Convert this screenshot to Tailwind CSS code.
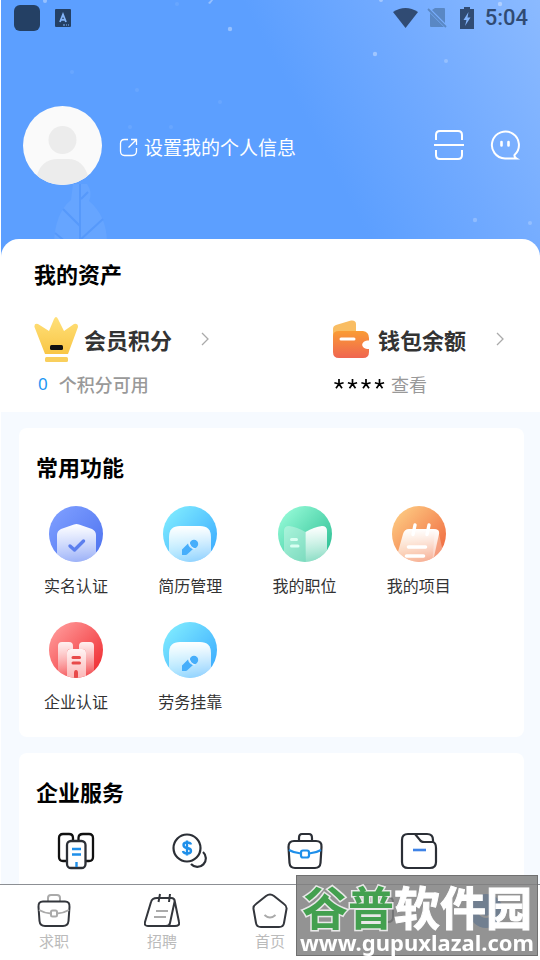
<!DOCTYPE html>
<html lang="zh-CN">
<head>
<meta charset="utf-8">
<meta name="viewport" content="width=device-width, initial-scale=1">
<title>我的</title>
<script src="https://cdn.jsdelivr.net/npm/@tailwindcss/browser@4"></script>
</head>
<body class="bg-white font-['Noto_Sans_CJK_SC',sans-serif] text-[#333]">
<svg class="absolute size-0" aria-hidden="true">
  <defs>
    <linearGradient id="blue" x1="0" y1="0" x2="1" y2="1"><stop offset="0.1" stop-color="#7c9dff"/><stop offset="1" stop-color="#4b70ee"/></linearGradient>
    <linearGradient id="cyan" x1="0" y1="0" x2="1" y2="1"><stop offset="0.1" stop-color="#7eeaff"/><stop offset="0.9" stop-color="#3cacff"/></linearGradient>
    <linearGradient id="green" x1="0" y1="0" x2="1" y2="1"><stop offset="0.1" stop-color="#93f9d6"/><stop offset="0.9" stop-color="#2dbf94"/></linearGradient>
    <linearGradient id="orange" x1="0" y1="0" x2="1" y2="1"><stop offset="0.1" stop-color="#fdc981"/><stop offset="0.9" stop-color="#f0693f"/></linearGradient>
    <linearGradient id="red" x1="0" y1="0" x2="1" y2="1"><stop offset="0.1" stop-color="#ff9797"/><stop offset="0.9" stop-color="#f02e33"/></linearGradient>
    <linearGradient id="fade" x1="0" y1="0" x2="0" y2="1"><stop offset="0" stop-color="#fff"/><stop offset="1" stop-color="#fff" stop-opacity="0.35"/></linearGradient>
    <linearGradient id="tower" x1="0" y1="0" x2="0" y2="1"><stop offset="0" stop-color="#fff0f0"/><stop offset="0.9" stop-color="#fff" stop-opacity="0.05"/></linearGradient>
    <linearGradient id="front" x1="0" y1="0" x2="0" y2="1"><stop offset="0" stop-color="#fff4f4"/><stop offset="1" stop-color="#fbaeae"/></linearGradient>
    <linearGradient id="gold" x1="0" y1="0" x2="0" y2="1"><stop offset="0" stop-color="#ffe07a"/><stop offset="1" stop-color="#f9c645"/></linearGradient>
    <linearGradient id="wallet" x1="0" y1="0" x2="0" y2="1"><stop offset="0" stop-color="#fa9c35"/><stop offset="1" stop-color="#ef6550"/></linearGradient>
    <clipPath id="disc"><ellipse cx="27" cy="28" rx="27" ry="28"/></clipPath>
    <symbol id="resume" viewBox="0 0 54 56">
      <g clip-path="url(#disc)"><path fill="url(#cyan)" d="M0 0h54v56H0z"/>
      <path fill="url(#fade)" d="M6 60V31Q6 20 17 20H37Q48 20 48 31V60z"/>
      <path fill="#46aefb" d="M19 49V43.500L25 37.500A7 7 0 0 0 30 43L24 48.500Q23 49 22 49Z"/><circle cx="31" cy="38" r="4.200" fill="#46aefb"/><path d="M26 36Q27 41.500 32 43" fill="none" stroke="#dff1ff" stroke-width="1.200"/></g>
    </symbol>
    <symbol id="chevron" viewBox="0 0 8 14"><path d="M1 1l6 6-6 6" fill="none" stroke="#aaa" stroke-width="1.300"/></symbol>
  </defs>
</svg>

<div class="relative flex h-screen flex-col overflow-hidden">
  <main class="ml-px min-h-0 flex-1 overflow-y-auto bg-[#f6faff] [scrollbar-width:none]">
    <header class="relative h-[259px] bg-[linear-gradient(62deg,#5c9fff_56%,#71aaff_76%,#8bbaff_100%)]">
      <svg class="absolute inset-0 size-full" viewBox="0 0 539 259" preserveAspectRatio="none" aria-hidden="true">
        <g fill="#fff">
          <g opacity=".35"><circle cx="229" cy="29" r="2.200"/><circle cx="374" cy="54" r="2.200"/><circle cx="499" cy="4" r="2.200"/><circle cx="44" cy="1" r="2"/><circle cx="380" cy="0" r="2"/><path d="M207 3l4-4 2 0-4 5z"/></g>
          <g opacity=".22"><circle cx="445" cy="61" r="2"/><circle cx="474" cy="220" r="2.200"/><circle cx="529" cy="223" r="2"/></g>
          <g opacity=".07"><circle cx="71" cy="72" r="2"/><circle cx="136" cy="90" r="2"/><circle cx="219" cy="102" r="2"/><circle cx="129" cy="127" r="2"/><circle cx="170" cy="127" r="2"/><circle cx="176" cy="4" r="2"/></g>
        </g>
        <path fill="#66a5ff" d="M53 243Q54 213 70 200L72 184H86Q92 192 88 201Q106 216 106 243Z"/>
        <path d="M79 184V243M62 209L79 226M102 219L79 240M54 233L66 243M80 199l7-7" fill="none" stroke="#5699fb" stroke-width="2"/>
      </svg>
      <div class="relative flex h-9 items-center justify-between pl-[13px] pr-3">
        <div class="flex items-center gap-[15px]">
          <span class="size-[26px] rounded-md bg-[#244064]"></span>
          <svg class="h-[18px] w-4" viewBox="0 0 16 18"><rect width="16" height="18" rx="1" fill="#244064"/><path d="M5 13L8 5.500L11 13M6 10.800H10" fill="none" stroke="#83b5fa" stroke-width="1.800"/><path d="M8 16h2m1 0h1m1 0h1" stroke="#83b5fa"/></svg>
        </div>
        <div class="flex items-center">
          <svg class="mr-2 h-[22px] w-[27px]" viewBox="0 0 27 22"><path fill="#304b73" d="M1 5Q13.500-3 26 5L13.500 21Z"/></svg>
          <svg class="mr-[13px] h-[22px] w-5" viewBox="0 0 20 22"><path fill="#5987c4" d="M8 1h9q1 0 1 1v14L5 3zM3 6l14 14H4q-1 0-1-1z"/><path d="M1 2l18 18" stroke="#5987c4" stroke-width="1.800"/></svg>
          <svg class="mr-[11px] h-[22px] w-[14px]" viewBox="0 0 14 22"><path fill="#304b73" d="M4 0h6v2h4v20H0V2h4z"/><path fill="#83b4fb" d="M8.500 5L3.500 13H6.500L5 19L10.500 10.500H7.500Z"/></svg>
          <span class="font-[Roboto,sans-serif] text-[22px] leading-9 font-medium text-[#304b73]">5:04</span>
        </div>
      </div>
      <div class="relative flex items-center pt-[70px] pr-[19px] pl-[22px]">
        <svg class="h-[79px] w-[79px]" viewBox="0 0 79 79" role="img" aria-label="头像"><clipPath id="avatar"><circle cx="39.500" cy="39.500" r="39.500"/></clipPath><g clip-path="url(#avatar)"><path fill="#fafafa" d="M0 0h79v79H0z"/><circle cx="39.500" cy="34" r="14" fill="#ececec"/><path fill="#ececec" d="M13 80V73Q17 53 35 53H45Q61 53 66 73V80z"/></g></svg>
        <a href="#profile" class="ml-[17px] flex items-center gap-1.5 text-[19px] leading-7 text-white">
          <svg class="mt-1 h-[19px] w-[19px]" viewBox="0 0 19 19" fill="none" stroke="#fff" stroke-width="1.300"><path d="M9 1.500H5.500Q1.500 1.500 1.500 5.500V13Q1.500 17.500 5.500 17.500H13Q17.500 17.500 17.500 13V10M9.500 9.500L17 2M12 1.500H17.500V7"/></svg>
          <span class="mt-0.5">设置我的个人信息</span>
        </a>
        <button type="button" class="mb-0.5 ml-auto" aria-label="扫一扫"><svg class="h-8 w-[30px]" viewBox="0 0 30 32" fill="none" stroke="#fff" stroke-width="2"><path d="M2 11V6Q2 2 6 2H24Q28 2 28 6V11M0 16H30M2 21V26Q2 30 6 30H24Q28 30 28 26V21"/></svg></button>
        <button type="button" class="mb-0.5 ml-[25px]" aria-label="消息"><svg class="h-8 w-8" viewBox="0 0 32 32" fill="none" stroke="#fff" stroke-width="2"><path d="M25.500 26A13.500 13.500 0 1 0 16 29.500H27.500Q25 28 25.500 26Z"/><path d="M12.500 13v3.500M19.500 13v3.500" stroke-width="2.600" stroke-linecap="round"/></svg></button>
      </div>
    </header>

    <section class="relative -mt-5 rounded-t-[18px] bg-white px-[33px] pt-[18px] pb-3">
      <h2 class="text-[22px] leading-8 font-bold text-black">我的资产</h2>
      <div class="mt-[25px] flex justify-between">
        <div>
          <a href="#points" class="flex h-[50px] items-center">
            <svg class="h-[46px] w-[44px]" viewBox="0 0 44 46"><path fill="url(#gold)" d="M11 38L0.500 11Q0 7 4 8L15 15L20 3Q22 -1 24 3L30 15L40 8Q44 7 44 11L34 38Z"/><rect x="16" y="29" width="13" height="5" rx="1.500" fill="#111"/><rect x="11" y="41" width="23" height="5" rx="1.500" fill="#f9cf5d"/></svg>
            <span class="ml-[6px] text-[22px] leading-8 font-bold">会员积分</span>
            <svg class="ml-[29px] h-[14px] w-2"><use href="#chevron"/></svg>
          </a>
          <p class="mt-1 flex gap-[11px] pl-1 text-[18px] leading-8"><span class="font-['Noto_Sans',sans-serif] text-[17px] text-[#2196f3]">0</span><span class="font-medium text-[#999]">个积分可用</span></p>
        </div>
        <div>
          <a href="#wallet" class="flex h-[50px] items-center">
            <svg class="h-[38px] w-[38px]" viewBox="0 0 38 38"><path fill="#f9bd63" d="M1 18V9Q1 6 4 5L19 .5Q24 0 24 4V16z"/><path fill="url(#wallet)" d="M7 11H31Q37 12 37 18V20.500C28 20.500 28 29 37 29V32Q37 38 31 38H7Q1 38 1 32V16Q1 11 7 11Z"/><path d="M9 19H22" stroke="#fff" stroke-width="3" stroke-linecap="round"/></svg>
            <span class="ml-2 text-[22px] leading-8 font-bold">钱包余额</span>
            <svg class="mr-[3px] ml-[30px] h-[14px] w-2"><use href="#chevron"/></svg>
          </a>
          <p class="mt-1 flex items-center gap-[5px] pl-[2px] text-[18px] leading-8">
            <svg class="h-[10px] w-[52px]" viewBox="0 0 52 10" stroke="#000" stroke-width="1.700" role="img" aria-label="余额已隐藏"><g id="star"><path d="M5 0V5L.4 3.700M5 5L9.600 3.700M5 5L2 9.300M5 5L8 9.300" fill="none"/></g><use href="#star" x="13.500"/><use href="#star" x="27"/><use href="#star" x="40.500"/></svg>
            <span class="text-[#999]">查看</span>
          </p>
        </div>
      </div>
    </section>

    <section class="mt-4 mr-4 ml-[18px] rounded-lg bg-white pt-[22px] pb-[21px]">
      <h2 class="pl-[17px] text-[22px] leading-8 font-bold text-black">常用功能</h2>
      <div class="mt-6 grid grid-cols-4 gap-y-[22px] pr-12 text-center text-[16px] leading-[30px]">
        <a href="#realname" class="flex flex-col items-center gap-2 text-[#333]">
          <svg class="h-14 w-[54px]" viewBox="0 0 54 56"><g clip-path="url(#disc)"><path fill="url(#blue)" d="M0 0h54v56H0z"/><path fill="url(#fade)" d="M8 60V29Q8 25 12 23L25 18.500Q27.500 17.500 30 18.500L43 23Q47 25 47 29V60z"/><path d="M21 40L25.500 44L34.500 35" fill="none" stroke="#5c7fee" stroke-width="3.400" stroke-linecap="round" stroke-linejoin="round"/></g></svg>实名认证</a>
        <a href="#resume-list" class="flex flex-col items-center gap-2 text-[#333]"><svg class="h-14 w-[54px]"><use href="#resume"/></svg>简历管理</a>
        <a href="#jobs" class="flex flex-col items-center gap-2 text-[#333]">
          <svg class="h-14 w-[54px]" viewBox="0 0 54 56"><g clip-path="url(#disc)"><path fill="url(#green)" d="M0 0h54v56H0z"/><path fill="#fff" fill-opacity=".32" d="M27.500 60V26Q19 21 11 20Q6 20 6 25V60z"/><path fill="url(#fade)" d="M27.500 60V26Q36 21 44 20Q49 20 49 25V60z"/><path d="M13.500 33.500H18.500M13.500 40H20" stroke="#d9fff2" stroke-width="3" stroke-linecap="round"/></g></svg>我的职位</a>
        <a href="#projects" class="flex flex-col items-center gap-2 text-[#333]">
          <svg class="h-14 w-[54px]" viewBox="0 0 54 56"><g clip-path="url(#disc)"><path fill="url(#orange)" d="M0 0h54v56H0z"/><path fill="#fff" fill-opacity=".3" d="M43 23Q47 25 47 28L52 50L40 60z"/><path fill="url(#fade)" d="M2 60L11 28Q12.500 23 17 23H42Q48 23 47 28L40 60z"/><path d="M23 19L21 28.500M37 19L35 28.500" stroke="#fff" stroke-width="3.400" stroke-linecap="round"/><path d="M16.500 41H33.500M14.500 50H31.500" stroke="#fff" stroke-width="3.600" stroke-linecap="round"/></g></svg>我的项目</a>
        <a href="#company" class="flex flex-col items-center gap-2 text-[#333]">
          <svg class="h-14 w-[54px]" viewBox="0 0 54 56"><g clip-path="url(#disc)"><path fill="url(#red)" d="M0 0h54v56H0z"/><path fill="url(#tower)" d="M9 60V24Q9 20 13 20H20Q24 20 24 24V27H21Q18 27 18 31V60zM45 60V24Q45 20 41 20H34Q30 20 30 24V27H33Q37 27 37 31V60z"/><path fill="url(#front)" d="M18 60V31Q18 27 22 27H33Q37 27 37 31V60z"/><path d="M24 35.500H30.500M24 41H30.500" stroke="#e84a4a" stroke-width="3" stroke-linecap="round"/><path fill="#e84a4a" d="M25 58V51Q25 48 27 48Q29 48 29 51V58z"/></g></svg>企业认证</a>
        <a href="#labor" class="flex flex-col items-center gap-2 text-[#333]"><svg class="h-14 w-[54px]"><use href="#resume"/></svg>劳务挂靠</a>
      </div>
    </section>

    <section class="mt-4 mr-4 ml-[18px] rounded-lg bg-white pt-[22px] pb-12">
      <h2 class="pl-[17px] text-[22px] leading-8 font-bold text-black">企业服务</h2>
      <div class="mt-[25px] grid grid-cols-4 justify-items-center pr-12">
        <a href="#enterprise" aria-label="企业"><svg class="size-[38px]" viewBox="0 0 38 38" fill="none" stroke="#111" stroke-width="2.300"><path d="M10 29H6Q2 29 2 25V6Q2 2 6 2H12Q16 2 16 6V9M28 29H32Q36 29 36 25V6Q36 2 32 2H26Q21.500 2 21.500 6V9"/><rect x="10" y="9" width="18.500" height="27" rx="4" stroke="#2b2f36"/><path d="M15 17H24M15 22.500H24M19.500 30V35" stroke="#1e8fea" stroke-width="2.400"/></svg></a>
        <a href="#money" aria-label="资金"><svg class="size-[38px]" viewBox="0 0 38 38" fill="none" stroke="#2b2f36" stroke-width="2.200"><circle cx="16" cy="16" r="13.500"/><path d="M32 20A8.500 8.500 0 1 1 20 32"/><path d="M20 12.500Q19.500 10.500 16 10.500Q12.500 10.500 12.500 13Q12.500 15.500 16 16Q20 16.500 20 19Q20 21.500 16 21.500Q12.500 21.500 12 19M16 8.500V23.500" stroke="#1e8fea" stroke-width="2.400"/></svg></a>
        <a href="#work" aria-label="工作"><svg class="size-[38px]" viewBox="0 0 38 38" fill="none" stroke="#2b2f36" stroke-width="2.200"><path d="M13 9V6Q13 2 16 2H23Q26 2 26 6V9M8 9H30Q36 9 35.500 15L34.500 31Q34 36 29 36H9Q4 36 3.500 31L2.500 15Q2.500 9 8 9Z"/><path d="M3 18Q8 21 15 21.500M35 18Q30 21 23 21.500" stroke="#1e8fea"/><rect x="15" y="18.500" width="8" height="7" rx="2" stroke="#1e8fea"/></svg></a>
        <a href="#files" aria-label="文件"><svg class="size-[38px]" viewBox="0 0 38 38" fill="none" stroke="#2b2f36" stroke-width="2.200"><path d="M2 8Q2 2 8 2H27Q33 2 33 8V10Q36 11 36 16V30Q36 36 30 36H8Q2 36 2 30Z"/><path d="M15 2L20 8Q21 10 24 10H33"/><path d="M13 18H26" stroke="#3f83e6" stroke-width="2.600"/></svg></a>
      </div>
    </section>
  </main>

  <nav class="grid h-[76px] shrink-0 grid-cols-5 border-t border-[#8c8f94] bg-white pt-2 text-[15px] leading-6 text-[#bbb]">
    <a href="#seek" class="flex flex-col items-center"><svg class="size-9" viewBox="0 0 36 36" fill="none" stroke="#33363c" stroke-width="2"><path d="M12 8V5Q12 2 15 2H21Q24 2 24 5V8" stroke="#aaa"/><path d="M7 8.500H29Q34 8.500 33.500 14L32.500 28Q32 33 27 33H9Q4 33 3.500 28L2.500 14Q2 8.500 7 8.500Z"/><path d="M3 17Q8 20 15 20.500M33 17Q28 20 21 20.500" stroke="#aaa"/><rect x="15" y="17.500" width="6" height="6" rx="1.500" stroke="#aaa"/></svg><span>求职</span></a>
    <a href="#hire" class="flex flex-col items-center"><svg class="size-9" viewBox="0 0 36 36" fill="none" stroke="#33363c" stroke-width="2"><path d="M13 5H27Q31 5 30.500 9L26 30Q25.500 33 22 33H4Q0 33 1 29L7 9Q8 5 13 5ZM30.500 7L35 29Q36 33 31 33H22"/><path d="M16 1L14.500 9M26 1L25 9"/><path d="M12 18H24M10 24H22" stroke="#aaa"/></svg><span>招聘</span></a>
    <a href="#home" class="flex flex-col items-center"><svg class="size-9" viewBox="0 0 36 36" fill="none" stroke="#33363c" stroke-width="2"><path d="M14 3Q18 0 22 3L32 11Q35 13 34.500 16L32 30Q31.500 34 27 34H9Q4.500 34 4 30L1.500 16Q1 13 4 11Z"/><path d="M12.500 22Q18 27 23.500 22" stroke="#aaa"/></svg><span>首页</span></a>
    <a href="#message" class="flex flex-col items-center" aria-label="消息"><svg class="size-9" viewBox="0 0 36 36" fill="none" stroke="#33363c" stroke-width="2"><path d="M8 4H28Q33 4 33 9V24Q33 29 28 29H22L18 33L14 29H8Q3 29 3 24V9Q3 4 8 4Z"/></svg></a>
    <a href="#mine" class="flex flex-col items-center" aria-label="我的"><svg class="size-9" viewBox="0 0 36 36"><circle cx="18" cy="18" r="17" fill="#1e78e8"/><path d="M11 20Q18 28 25 20" fill="none" stroke="#fff" stroke-width="2"/></svg></a>
  </nav>

  <div class="pointer-events-none absolute right-[2px] bottom-1 flex h-[81px] w-[242px] flex-col items-center border border-[#707070] bg-[#808080]/85 pt-1 whitespace-nowrap text-white">
    <p class="flex text-[46px] leading-[50px] font-bold"><span class="text-[#43a04f] [-webkit-text-stroke:3px_#e8e8e8] [paint-order:stroke_fill]">谷普</span><span class="[-webkit-text-stroke:1px_#fff]">软件园</span></p>
    <p class="font-['Noto_Sans',sans-serif] text-[22px] leading-6 font-bold">www.gupuxlazal.com</p>
  </div>
</div>
</body>
</html>
